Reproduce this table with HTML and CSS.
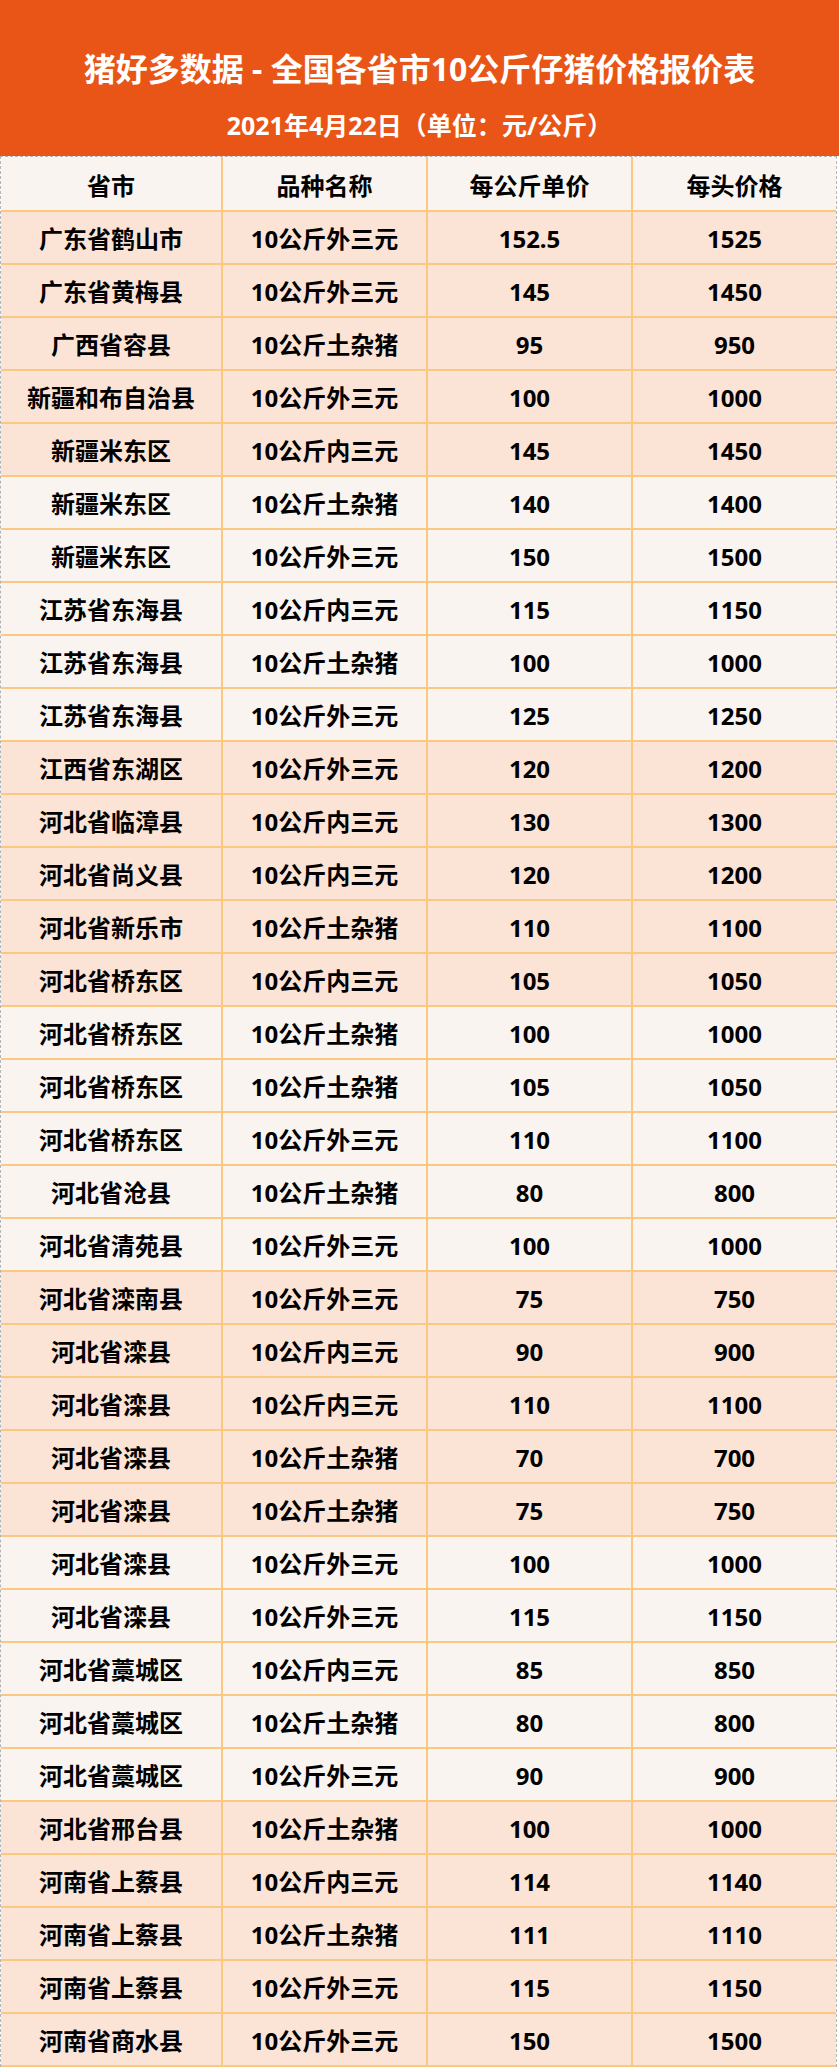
FILE: index.html
```html
<!DOCTYPE html>
<html lang="zh-CN">
<head>
<meta charset="utf-8">
<title>猪好多数据 - 全国各省市10公斤仔猪价格报价表</title>
<link rel="stylesheet" href="styles.css">
</head>
<body>
<div class="page">
  <header class="banner">
    <h1 class="title">猪好多数据 - 全国各省市10公斤仔猪价格报价表</h1>
    <p class="subtitle">2021年4月22日<span class="punct">（</span>单位<span class="punct">：</span>元/公斤<span class="punct">）</span></p>
  </header>
  <div class="table">
    <div class="row head"><div class="cell">省市</div><div class="cell">品种名称</div><div class="cell">每公斤单价</div><div class="cell">每头价格</div></div>
    <div class="row"><div class="cell">广东省鹤山市</div><div class="cell">10公斤外三元</div><div class="cell">152.5</div><div class="cell">1525</div></div>
    <div class="row"><div class="cell">广东省黄梅县</div><div class="cell">10公斤外三元</div><div class="cell">145</div><div class="cell">1450</div></div>
    <div class="row"><div class="cell">广西省容县</div><div class="cell">10公斤土杂猪</div><div class="cell">95</div><div class="cell">950</div></div>
    <div class="row"><div class="cell">新疆和布自治县</div><div class="cell">10公斤外三元</div><div class="cell">100</div><div class="cell">1000</div></div>
    <div class="row"><div class="cell">新疆米东区</div><div class="cell">10公斤内三元</div><div class="cell">145</div><div class="cell">1450</div></div>
    <div class="row light"><div class="cell">新疆米东区</div><div class="cell">10公斤土杂猪</div><div class="cell">140</div><div class="cell">1400</div></div>
    <div class="row light"><div class="cell">新疆米东区</div><div class="cell">10公斤外三元</div><div class="cell">150</div><div class="cell">1500</div></div>
    <div class="row light"><div class="cell">江苏省东海县</div><div class="cell">10公斤内三元</div><div class="cell">115</div><div class="cell">1150</div></div>
    <div class="row light"><div class="cell">江苏省东海县</div><div class="cell">10公斤土杂猪</div><div class="cell">100</div><div class="cell">1000</div></div>
    <div class="row light"><div class="cell">江苏省东海县</div><div class="cell">10公斤外三元</div><div class="cell">125</div><div class="cell">1250</div></div>
    <div class="row"><div class="cell">江西省东湖区</div><div class="cell">10公斤外三元</div><div class="cell">120</div><div class="cell">1200</div></div>
    <div class="row"><div class="cell">河北省临漳县</div><div class="cell">10公斤内三元</div><div class="cell">130</div><div class="cell">1300</div></div>
    <div class="row"><div class="cell">河北省尚义县</div><div class="cell">10公斤内三元</div><div class="cell">120</div><div class="cell">1200</div></div>
    <div class="row"><div class="cell">河北省新乐市</div><div class="cell">10公斤土杂猪</div><div class="cell">110</div><div class="cell">1100</div></div>
    <div class="row"><div class="cell">河北省桥东区</div><div class="cell">10公斤内三元</div><div class="cell">105</div><div class="cell">1050</div></div>
    <div class="row light"><div class="cell">河北省桥东区</div><div class="cell">10公斤土杂猪</div><div class="cell">100</div><div class="cell">1000</div></div>
    <div class="row light"><div class="cell">河北省桥东区</div><div class="cell">10公斤土杂猪</div><div class="cell">105</div><div class="cell">1050</div></div>
    <div class="row light"><div class="cell">河北省桥东区</div><div class="cell">10公斤外三元</div><div class="cell">110</div><div class="cell">1100</div></div>
    <div class="row light"><div class="cell">河北省沧县</div><div class="cell">10公斤土杂猪</div><div class="cell">80</div><div class="cell">800</div></div>
    <div class="row light"><div class="cell">河北省清苑县</div><div class="cell">10公斤外三元</div><div class="cell">100</div><div class="cell">1000</div></div>
    <div class="row"><div class="cell">河北省滦南县</div><div class="cell">10公斤外三元</div><div class="cell">75</div><div class="cell">750</div></div>
    <div class="row"><div class="cell">河北省滦县</div><div class="cell">10公斤内三元</div><div class="cell">90</div><div class="cell">900</div></div>
    <div class="row"><div class="cell">河北省滦县</div><div class="cell">10公斤内三元</div><div class="cell">110</div><div class="cell">1100</div></div>
    <div class="row"><div class="cell">河北省滦县</div><div class="cell">10公斤土杂猪</div><div class="cell">70</div><div class="cell">700</div></div>
    <div class="row"><div class="cell">河北省滦县</div><div class="cell">10公斤土杂猪</div><div class="cell">75</div><div class="cell">750</div></div>
    <div class="row light"><div class="cell">河北省滦县</div><div class="cell">10公斤外三元</div><div class="cell">100</div><div class="cell">1000</div></div>
    <div class="row light"><div class="cell">河北省滦县</div><div class="cell">10公斤外三元</div><div class="cell">115</div><div class="cell">1150</div></div>
    <div class="row light"><div class="cell">河北省藁城区</div><div class="cell">10公斤内三元</div><div class="cell">85</div><div class="cell">850</div></div>
    <div class="row light"><div class="cell">河北省藁城区</div><div class="cell">10公斤土杂猪</div><div class="cell">80</div><div class="cell">800</div></div>
    <div class="row light"><div class="cell">河北省藁城区</div><div class="cell">10公斤外三元</div><div class="cell">90</div><div class="cell">900</div></div>
    <div class="row"><div class="cell">河北省邢台县</div><div class="cell">10公斤土杂猪</div><div class="cell">100</div><div class="cell">1000</div></div>
    <div class="row"><div class="cell">河南省上蔡县</div><div class="cell">10公斤内三元</div><div class="cell">114</div><div class="cell">1140</div></div>
    <div class="row"><div class="cell">河南省上蔡县</div><div class="cell">10公斤土杂猪</div><div class="cell">111</div><div class="cell">1110</div></div>
    <div class="row"><div class="cell">河南省上蔡县</div><div class="cell">10公斤外三元</div><div class="cell">115</div><div class="cell">1150</div></div>
    <div class="row"><div class="cell">河南省商水县</div><div class="cell">10公斤外三元</div><div class="cell">150</div><div class="cell">1500</div></div>
  </div>
</div>
</body>
</html>
```

FILE: styles.css
```css
* {
  box-sizing: border-box;
}

html, body {
  margin: 0;
  padding: 0;
  background: #ffffff;
}

body {
  width: 839px;
  font-family: "Noto Sans", "Noto Sans CJK SC", sans-serif;
  font-weight: 700;
  color: #000000;
}

.banner {
  height: 156px;
  background: #e85516;
  color: #ffffff;
  text-align: center;
  padding-top: 49px;
}

.title {
  margin: 0;
  font-size: 32px;
  line-height: 40px;
  font-weight: 700;
}

.subtitle {
  margin: 19px 0 0;
  font-size: 25px;
  line-height: 32px;
  font-weight: 700;
}

.punct {
  font-family: "Noto Sans CJK TC", "Noto Sans CJK SC", sans-serif;
}

.table {
  width: 837px;
  border-top: 1px dashed #b4b4b4;
  border-left: 1px dashed #b4b4b4;
  border-right: 1px dashed #b4b4b4;
}

.row {
  display: grid;
  grid-template-columns: 222px 205px 205px 203px;
  height: 53px;
  border-bottom: 2px solid #fac97f;
  background: #fbe4d6;
}

.row.light,
.row.head {
  background: #f9f4f0;
}

.row.head {
  height: 55px;
}

.cell {
  display: flex;
  align-items: center;
  justify-content: center;
  border-right: 2px solid #fac97f;
  font-size: 24px;
  line-height: 30px;
  padding-top: 3px;
  white-space: nowrap;
}

.row.head .cell {
  padding-top: 4px;
}

.cell:last-child {
  border-right: none;
}
```
